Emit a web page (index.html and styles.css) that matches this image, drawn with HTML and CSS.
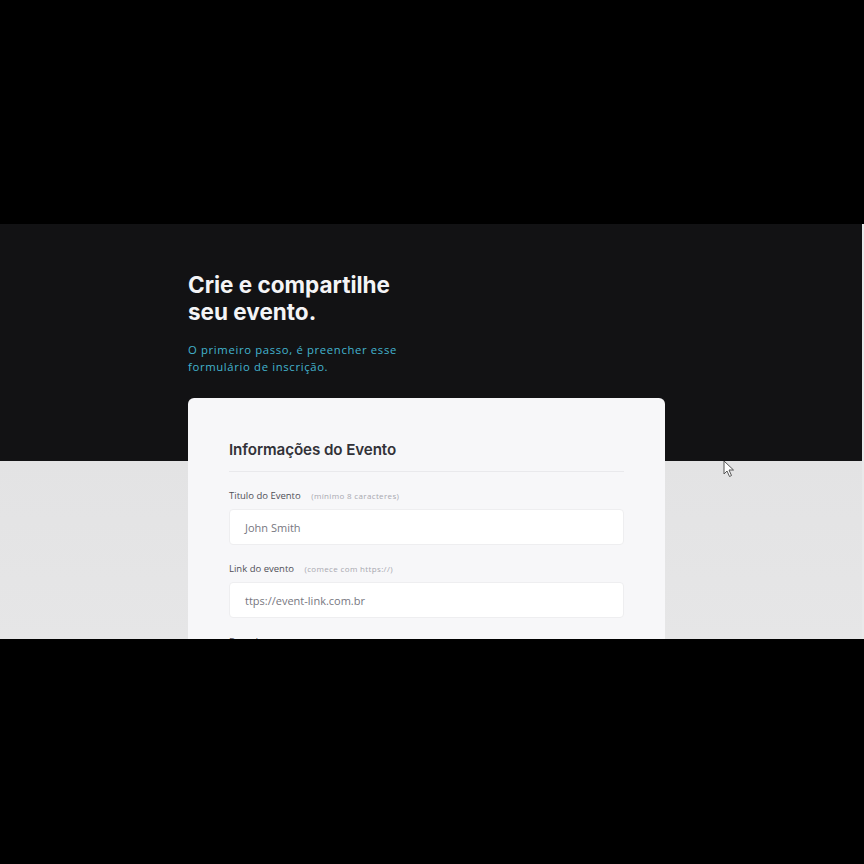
FILE: index.html
```html
<!DOCTYPE html>
<html lang="pt-BR">
<head>
<meta charset="utf-8">
<title>Crie e compartilhe seu evento</title>
<link rel="stylesheet" href="styles.css">
</head>
<body>
<div class="screen">
  <div class="page">
    <div class="column">
      <h1 class="title">Crie e compartilhe<br>seu evento.</h1>
      <p class="subtitle">O primeiro passo, é preencher esse<br>formulário de inscrição.</p>
      <form class="card">
        <h2 class="card-title">Informações do Evento</h2>
        <div class="field">
          <label class="label">Titulo do Evento <span class="hint">(mínimo 8 caracteres)</span></label>
          <div class="input">John Smith</div>
        </div>
        <div class="field">
          <label class="label">Link do evento <span class="hint">(comece com https://)</span></label>
          <div class="input">ttps://event-link.com.br</div>
        </div>
        <div class="field">
          <label class="label">Data do evento <span class="hint">(dia e horário do evento)</span></label>
          <div class="input">dd/mm/aaaa</div>
        </div>
      </form>
    </div>
    <svg class="cursor" width="12" height="18" viewBox="0 0 12 18"><path d="M1 1 L1 14 L4 11 L6.5 16.5 L8.5 15.5 L6 10 L10.5 10 Z" fill="#fff" stroke="#555" stroke-width="1"/></svg>
  </div>
</div>
</body>
</html>
```
FILE: styles.css
```css
html, body {
  margin: 0;
  padding: 0;
  background: #000;
}
.screen {
  margin-top: 224px;
  height: 415px;
  width: 862px;
  border-right: 2px solid #e9e9ea;
  overflow: hidden;
}
.page {
  position: relative;
  height: 100%;
  background: linear-gradient(#121214 0, #121214 237px, #e3e3e4 237px, #e6e6e7 100%);
  font-family: "Open Sans", "Liberation Sans", sans-serif;
}
.column {
  margin-left: 188px;
  width: 477px;
  padding-top: 47px;
}
.title {
  margin: 0;
  font-family: Inter, "Liberation Sans", sans-serif;
  font-weight: 700;
  font-size: 22.5px;
  line-height: 27px;
  color: #f4f4f6;
  letter-spacing: 0;
}
.subtitle {
  margin: 16px 0 0;
  font-size: 11.3px;
  line-height: 17px;
  color: #43b4cf;
  letter-spacing: 0.65px;
}
.card {
  margin-top: 23px;
  background: #f7f7f9;
  border-radius: 6px;
  padding: 42px 41px 30px;
}
.card-title {
  margin: 0;
  padding-bottom: 11px;
  border-bottom: 1px solid #e9e9ec;
  font-family: Inter, "Liberation Sans", sans-serif;
  font-weight: 600;
  font-size: 15.2px;
  line-height: 20px;
  color: #323238;
  letter-spacing: -0.1px;
}
.field {
  display: flex;
  flex-direction: column;
  margin-top: 17px;
}
.label {
  font-size: 9.5px;
  line-height: 13px;
  color: #505058;
  margin-bottom: 7px;
}
.hint {
  margin-left: 8px;
  font-size: 8px;
  color: #a8a8b0;
  letter-spacing: 0.35px;
}
.input {
  height: 36px;
  box-sizing: border-box;
  background: #fff;
  border: 1px solid #eeeef0;
  border-radius: 4px;
  padding: 0 15px;
  display: flex;
  align-items: center;
  font-size: 11px;
  color: #77777f;
}
.cursor {
  position: absolute;
  left: 723px;
  top: 236px;
}
```
